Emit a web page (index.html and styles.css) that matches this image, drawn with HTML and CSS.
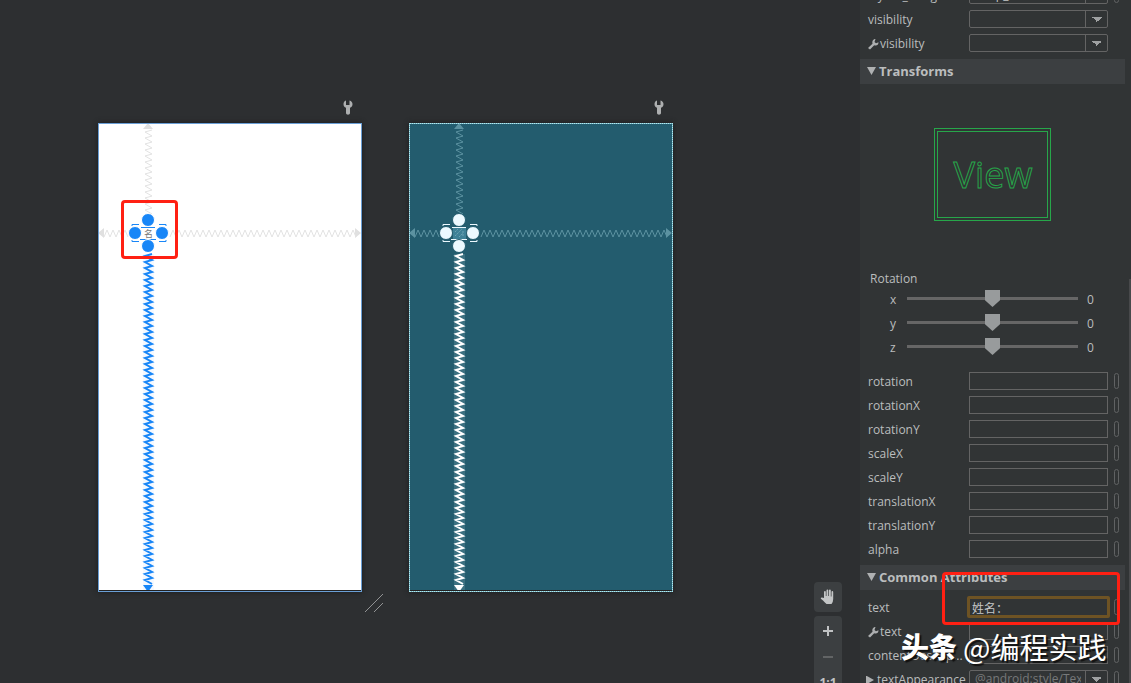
FILE: index.html
```html
<!DOCTYPE html>
<html lang="zh-CN">
<head>
<meta charset="utf-8">
<title>Layout Editor</title>
<link rel="stylesheet" href="styles.css">
</head>
<body>
<svg class="defs" aria-hidden="true">
  <symbol id="wrench" viewBox="0 0 10 15"><path fill="#adafb0" d="M3 0.500 V5 H6.500 V0.500 C8.500 1 9.500 2.500 9.500 4.300 C9.500 6 8.500 7.200 7 7.800 V13 C7 15.200 3 15.200 3 13 V7.800 C1.500 7.200 .5 6 .5 4.300 C.5 2.500 1.200 1 3 0.500Z"/></symbol>
  <symbol id="wrench-s" viewBox="0 0 11 11"><path fill="#adafb0" d="M7.500 0 L6.500 3 L8 4.200 L10.500 3.200 C10.500 6 8.500 7 6.200 6.200 L2 10.500 L0 9 L4.500 4.800 C3.800 2 5.500 0 7.500 0Z"/></symbol>
</svg>

<div class="editor">
  <main class="surface">
    <section class="board light">
      <button class="board-tool" aria-label="Design options"><svg width="10" height="15"><use href="#wrench"/></svg></button>
      <div class="sheet">
        <svg class="constraints" viewBox="0 0 264 469" role="img" aria-label="Design view">
          <g class="weak">
            <path class="arrow" d="M45 6 L50 0 L55 6Z M0 110 L6 105 V115Z M263 110 L257 105 V115Z"/>
            <path class="soft soft-v"/>
            <path class="soft soft-h"/>
          </g>
          <g class="strong"><rect class="glow" x="45" y="131" width="11" height="337"/><path class="spring"/><path class="arrow" d="M45 462 H55 L50 469Z"/></g>
          <rect class="widget" x="44" y="104" width="13" height="12"/>
          <text class="glyph" x="46" y="114">名</text>
          <path class="frame" d="M43 104.500 H57 M42 116.500 H58 M34 103 V101.500 H41 M61 101.500 H68 V103 M34 117 V118.500 H41 M61 118.500 H68 V117"/>
          <g class="handles"><circle cx="50" cy="97" r="6.500"/><circle cx="37" cy="110" r="6.500"/><circle cx="64" cy="110" r="6.500"/><circle cx="50" cy="123" r="6.500"/></g>
        </svg>
        <div class="mark mark-widget"></div>
        <svg class="resize" width="18" height="18" viewBox="0 0 18 18"><path d="M0 18 L18 0 M9 18 L18 9" stroke="#929394" fill="none"/></svg>
      </div>
    </section>
    <section class="board blueprint">
      <button class="board-tool" aria-label="Blueprint options"><svg width="10" height="15"><use href="#wrench"/></svg></button>
      <div class="sheet">
        <svg class="constraints" viewBox="0 0 264 469" role="img" aria-label="Blueprint view">
          <g class="weak">
            <path class="arrow" d="M45 6 L50 0 L55 6Z M0 110 L6 105 V115Z M263 110 L257 105 V115Z"/>
            <path class="soft soft-v"/>
            <path class="soft soft-h"/>
          </g>
          <g class="strong"><rect class="glow" x="45" y="131" width="11" height="337"/><path class="spring"/><path class="arrow" d="M45 462 H55 L50 469Z"/></g>
          <rect class="widget" x="44" y="104" width="13" height="12"/>
          <path d="M46 113 l7 -7 M46 109 l3 -3 M50 114 l4 -4 M54 108 v6" stroke="#6da4b4" stroke-dasharray="2 1" fill="none"/>
          <path class="frame" d="M43 104.500 H57 M42 116.500 H58 M34 103 V101.500 H41 M61 101.500 H68 V103 M34 117 V118.500 H41 M61 118.500 H68 V117"/>
          <g class="handles"><circle cx="50" cy="97" r="6.500"/><circle cx="37" cy="110" r="6.500"/><circle cx="64" cy="110" r="6.500"/><circle cx="50" cy="123" r="6.500"/></g>
        </svg>
      </div>
    </section>
    <div class="view-tools">
      <button class="tool pan" aria-label="Pan"><svg width="16" height="16" viewBox="0 0 16 16"><path fill="#c3c5c6" d="M4 9 V3 Q4 2 5 2 Q5.800 2 5.800 3 V7 H6.500 V1.500 Q6.500 .5 7.400 .5 Q8.300 .5 8.300 1.500 V7 H9 V1.500 Q9 .5 9.900 .5 Q10.800 .5 10.800 1.500 V7.500 H11.500 V3 Q11.500 2 12.300 2 Q13.200 2 13.200 3 V10 Q13.200 13 11.500 15 H6.500 Q4.500 13 3 11.500 L.8 9.800 Q.5 8.500 2 8.500Z"/></svg></button>
      <div class="zoom-group">
        <button class="tool" aria-label="Zoom in"><svg width="10" height="10"><path d="M0 5H10M5 0V10" stroke="#c0c2c3" stroke-width="2"/></svg></button>
        <button class="tool" aria-label="Zoom out"><svg width="10" height="10"><path d="M0 5H10" stroke="#626465" stroke-width="2"/></svg></button>
        <button class="tool ratio">1:1</button>
      </div>
    </div>
  </main>

  <aside class="panel">
    <div class="rows clipped">
      <div class="row"><label for="lm">layout_margin</label><select id="lm"><option>wrap_content</option></select><i class="pill"></i></div>
      <div class="row"><label for="vis">visibility</label><select id="vis"><option></option></select></div>
      <div class="row"><label for="tvis"><svg width="11" height="11"><use href="#wrench-s"/></svg>visibility</label><select id="tvis"><option></option></select></div>
    </div>
    <h2 class="section"><span class="tri"></span>Transforms</h2>
    <div class="preview"><div class="view-outer"><div class="view-inner"><svg viewBox="0 0 111 87" role="img"><text class="view-text" x="56" y="57" text-anchor="middle">View</text></svg></div></div></div>
    <div class="rotation">
      <div class="rotation-title">Rotation</div>
      <div class="slide"><label for="rx">x</label><input id="rx" type="range" min="-360" max="360" value="0"><output>0</output></div>
      <div class="slide"><label for="ry">y</label><input id="ry" type="range" min="-360" max="360" value="0"><output>0</output></div>
      <div class="slide"><label for="rz">z</label><input id="rz" type="range" min="-360" max="360" value="0"><output>0</output></div>
    </div>
    <div class="rows">
      <div class="row"><label for="a1">rotation</label><input id="a1" type="text"><i class="pill"></i></div>
      <div class="row"><label for="a2">rotationX</label><input id="a2" type="text"><i class="pill"></i></div>
      <div class="row"><label for="a3">rotationY</label><input id="a3" type="text"><i class="pill"></i></div>
      <div class="row"><label for="a4">scaleX</label><input id="a4" type="text"><i class="pill"></i></div>
      <div class="row"><label for="a5">scaleY</label><input id="a5" type="text"><i class="pill"></i></div>
      <div class="row"><label for="a6">translationX</label><input id="a6" type="text"><i class="pill"></i></div>
      <div class="row"><label for="a7">translationY</label><input id="a7" type="text"><i class="pill"></i></div>
      <div class="row"><label for="a8">alpha</label><input id="a8" type="text"><i class="pill"></i></div>
    </div>
    <h2 class="section"><span class="tri"></span>Common Attributes</h2>
    <div class="rows common">
      <div class="row"><label for="b1">text</label><input id="b1" class="active" type="text" value="姓名："><i class="pill"></i></div>
      <div class="row"><label for="b2"><svg width="11" height="11"><use href="#wrench-s"/></svg>text</label><input id="b2" type="text"><i class="pill"></i></div>
      <div class="row"><label for="b3">contentDescrip...</label><input id="b3" type="text"><i class="pill"></i></div>
      <div class="row"><label class="expand" for="b4"><span class="tri side"></span>textAppearance</label><select id="b4" class="hint"><option>@android:style/TextAppearance</option></select><i class="pill"></i></div>
      <div class="mark mark-text"></div>
      <div class="watermark"><b>头条</b><span>@编程实践</span></div>
    </div>
    <div class="scroll"></div>
  </aside>
</div>
<script src="springs.js"></script>
</body>
</html>
```
FILE: styles.css
```css
* { box-sizing: border-box; }
body {
  margin: 0;
  background: #2d2f31;
  color: #bbbdbe;
  font: 12px/16px "Open Sans", "Noto Sans CJK SC", sans-serif;
}
button { border: 0; padding: 0; background: none; color: inherit; font: inherit; }
.defs { position: absolute; width: 0; height: 0; }
.editor { display: grid; grid-template-columns: 1fr 271px; height: 100vh; overflow: hidden; }

.surface { position: relative; display: flex; align-items: flex-start; gap: 47px; padding: 100px 0 0 98px; }
.board { display: flex; flex-direction: column; gap: 8px; width: 264px; }
.board-tool { align-self: flex-end; margin-right: 9px; height: 15px; }
.board-tool svg { display: block; }
.sheet { position: relative; box-shadow: 0 0 5px #1b1c1d; }
.sheet::after { content: ""; position: absolute; inset: 0; border: 1px solid #6a9fd6; box-shadow: inset 0 -1px #222; pointer-events: none; }
.light .sheet { background: #fff; }
.blueprint .sheet { background: #235c6e; }
.blueprint .sheet::before { content: ""; position: absolute; inset: 0; border: 1px solid #6fb2c0; }
.blueprint .sheet::after { border: 1px dotted #b5e8f0; }
.constraints { display: block; width: 100%; height: auto; }
.soft { fill: none; stroke: #e3e3e3; stroke-width: 1; }
.weak .arrow { fill: #e0e0e0; }
.spring { fill: none; stroke: #1886f7; stroke-width: 2; }
.strong .arrow { fill: #1886f7; }
.glow { fill: #f5f9ff; }
.widget { fill: #fff; }
.glyph { font: 9px "Noto Sans CJK SC", sans-serif; fill: #777; }
.frame { fill: none; stroke: #1886f7; }
.handles { fill: #1886f7; stroke: #fff; }
.blueprint .soft { stroke: #5c92a1; }
.blueprint .weak .arrow { fill: #5c92a1; }
.blueprint .spring { stroke: #fff; }
.blueprint .strong .arrow { fill: #fff; }
.blueprint .glow { fill: #3b7080; }
.blueprint .widget { fill: #3e8197; }
.blueprint .frame { stroke: #ecf9ff; }
.blueprint .handles { fill: #ecf9ff; stroke: #235c6e; }
.resize { position: absolute; right: -21px; bottom: -20px; }

.mark { position: absolute; z-index: 2; border: 3px solid #ff2013; border-radius: 4px; pointer-events: none; }
.mark-widget { left: 23px; top: 77px; width: 57px; height: 59px; }
.mark-text { left: 82px; right: 11px; top: -18px; height: 53px; }

.view-tools { position: absolute; right: 18px; top: 582px; display: flex; flex-direction: column; gap: 4px; width: 28px; }
.tool { display: grid; place-items: center; width: 28px; height: 26px; }
.pan { height: 30px; border-radius: 4px; background: #3c3f41; }
.zoom-group { padding: 2px 0; border-radius: 4px; background: #3c3f41; }
.ratio { color: #c0c2c3; font-weight: 700; }

.panel { position: relative; overflow: hidden; background: #313435; }
.rows { display: flex; flex-direction: column; }
.clipped { margin-top: -17px; }
.row {
  display: grid;
  grid-template-columns: 95px 139px 5px;
  column-gap: 6px;
  align-items: center;
  height: 24px;
  padding-left: 8px;
}
.row label { display: flex; align-items: center; gap: 1px; padding-top: 2px; white-space: nowrap; }
.row input, .row select {
  width: 100%;
  height: 18px;
  padding: 0 5px;
  border: 1px solid #646464;
  background: #313435;
  color: #c5c7c8;
  font: inherit;
}
.row select {
  appearance: none;
  border-radius: 2px;
  padding-right: 26px;
  background:
    linear-gradient(to top right, transparent 50%, #9fa1a2 50%) right 10px center / 5px 5px no-repeat,
    linear-gradient(to top left, transparent 50%, #9fa1a2 50%) right 5px center / 5px 5px no-repeat,
    linear-gradient(#646464, #646464) right 21px top / 1px 100% no-repeat,
    #313435;
}
.row select.hint { color: #77797a; }
.row input.active { width: 143px; height: 22px; margin-left: -2px; padding: 0 2px; border: 3px solid #6e5324; border-radius: 2px; font-family: "Noto Sans CJK SC", sans-serif; }
.pill { height: 16px; border: 1px solid #606263; border-radius: 3px; }
.section {
  display: flex;
  align-items: center;
  gap: 3px;
  height: 25px;
  margin: 4px 6px 0 0;
  padding: 0 0 1px 7px;
  background: #3c3f41;
  font-size: 13px;
  line-height: 16px;
}
.tri { width: 9px; height: 8px; background: #afb1b2; clip-path: polygon(0 0, 100% 0, 50% 100%); }
.tri.side { flex: none; width: 8px; height: 9px; clip-path: polygon(0 0, 100% 50%, 0 100%); }
.row label.expand { gap: 3px; margin-left: -2px; }
.preview { display: grid; justify-content: center; height: 187px; padding: 44px 6px 0 0; }
.view-outer { width: 117px; height: 93px; padding: 2px; border: 1px solid #27a64a; }
.view-inner { height: 100%; border: 1px solid #27a64a; }
.view-inner svg { display: block; width: 100%; height: 100%; }
.view-text { font: 37px "Open Sans", sans-serif; fill: none; stroke: #27a64a; stroke-width: 1; }
.rotation { padding-bottom: 9px; }
.rotation-title { height: 17px; padding-left: 10px; }
.slide { display: grid; grid-template-columns: 8px 171px 8px; column-gap: 9px; height: 24px; padding-left: 30px; line-height: 24px; }
.slide input { appearance: none; width: 171px; height: 17px; margin: 2px 0 0; background: linear-gradient(transparent 7px, #666 7px, #666 10px, transparent 10px); }
.slide input::-webkit-slider-thumb { appearance: none; width: 15px; height: 17px; background: #989b9c; clip-path: polygon(0 0, 100% 0, 100% 60%, 50% 100%, 0 60%); }
.common { position: relative; padding-top: 5px; }
.watermark {
  position: absolute;
  z-index: 3;
  left: 41px;
  top: 36px;
  display: flex;
  gap: 6px;
  align-items: center;
  color: #fff;
  font: 29px/40px "Noto Sans CJK SC", sans-serif;
  text-shadow: 2px 2px 1px #111;
  white-space: nowrap;
}
.watermark b { font-size: 28px; font-weight: 900; }
.scroll { position: absolute; right: 0; top: 279px; bottom: 0; width: 2px; background: #48494b; }
```
FILE: springs.js
```js
function vertical(from, to) {
  let d = `M54 ${from}`;
  for (let y = from; y < to; y += 6) d += ` L47 ${y + 2} L54 ${y + 6}`;
  return d;
}
function horizontal(from, to) {
  let d = `M${from} 114`;
  for (let x = from; x < to; x += 6) d += ` L${x + 3} 107 L${x + 6} 114`;
  return d;
}
function draw(selector, d) {
  document.querySelectorAll(selector).forEach((path) => path.setAttribute("d", d));
}
draw(".soft-v", vertical(7, 88));
draw(".soft-h", horizontal(6, 28) + horizontal(72, 255));
draw(".spring", vertical(131, 460));
```
